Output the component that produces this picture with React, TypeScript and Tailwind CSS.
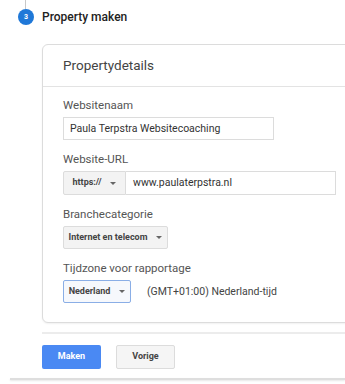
import React from 'react';

function Caret() {
  return (
    <svg width="6" height="3" viewBox="0 0 6 3" className="shrink-0">
      <path d="M0 0h6L3 3z" fill="#666" />
    </svg>
  );
}

function SelectButton({
  label,
  width,
  active = false,
  className = '',
}: {
  label: string;
  width: string;
  active?: boolean;
  className?: string;
}) {
  return (
    <div
      className={`flex h-full items-center justify-center gap-[9px] whitespace-nowrap rounded-[2px] border bg-[#f3f3f3] text-[9px] font-bold text-[#444] ${width} ${
        active ? 'border-[#8aaee6] bg-[#f6f8fc]' : 'border-[#dcdcdc]'
      } ${className}`}
    >
      <span>{label}</span>
      <Caret />
    </div>
  );
}

function Label({ children, first = false }: { children: React.ReactNode; first?: boolean }) {
  return (
    <div className={`mb-[4px] h-4 text-[11.5px] leading-4 text-[#555] ${first ? '' : 'mt-[11px]'}`}>
      {children}
    </div>
  );
}

export default function App() {
  return (
    <div
      className="relative h-[384px] w-[345px] overflow-hidden bg-white"
      style={{ fontFamily: 'Roboto, "Liberation Sans", Arial, sans-serif' }}
    >
      {/* stepper */}
      <div className="ml-[25px] h-[9px] w-px bg-[#c8c8c8]" />
      <div className="flex items-center gap-[8px] pl-[18px]">
        <div className="flex h-4 w-4 items-center justify-center rounded-full bg-[#1f78d8] text-[7px] font-bold text-white">
          3
        </div>
        <div className="text-[12px] font-medium leading-4 text-[#222]">Property maken</div>
      </div>

      {/* card */}
      <div className="ml-[42px] mt-[19px] w-[330px] rounded-md border border-[#dcdcdc] bg-white shadow-[0_1px_2px_rgba(0,0,0,0.06)]">
        <div className="flex h-[42px] items-center border-b border-[#e3e3e3] pl-[20px] text-[13.5px] text-[#444]">
          Propertydetails
        </div>
        <div className="pb-[19px] pl-[20px] pt-[10px]">
          <Label first>Websitenaam</Label>
          <div className="flex h-[23px] w-[211px] items-center border border-[#dcdcdc] px-[6px] text-[10.5px] text-[#333]">
            Paula Terpstra Websitecoaching
          </div>

          <Label>Website-URL</Label>
          <div className="flex h-[24px]">
            <SelectButton label="https://" width="w-[63px]" className="rounded-r-none" />
            <div className="flex w-[210px] items-center border border-l-0 border-[#dcdcdc] px-[7px] text-[10.5px] text-[#333]">
              www.paulaterpstra.nl
            </div>
          </div>

          <Label>Branchecategorie</Label>
          <div className="h-[23px]">
            <SelectButton label="Internet en telecom" width="w-[105px]" />
          </div>

          <Label>Tijdzone voor rapportage</Label>
          <div className="flex h-[23px] items-center">
            <SelectButton label="Nederland" width="w-[68px]" active />
            <span className="ml-[16px] text-[10.5px] text-[#444]">(GMT+01:00) Nederland-tijd</span>
          </div>
        </div>
      </div>

      <div className="ml-[42px] mt-[9px] h-[2px] bg-[#ececec]" />

      {/* actions */}
      <div className="ml-[42px] mt-[11px] flex gap-[15px] text-[9px] font-bold">
        <button className="flex h-[24px] w-[59px] items-center justify-center rounded-[2px] bg-[#4a89f3] text-white">
          Maken
        </button>
        <button className="flex h-[24px] w-[59px] items-center justify-center rounded-[2px] border border-[#dcdcdc] bg-[#f5f5f5] text-[#444]">
          Vorige
        </button>
      </div>

      <div className="ml-[10px] mt-[9px] h-[2px] bg-[#dedede] shadow-[0_1px_2px_rgba(0,0,0,0.1)]" />
    </div>
  );
}
